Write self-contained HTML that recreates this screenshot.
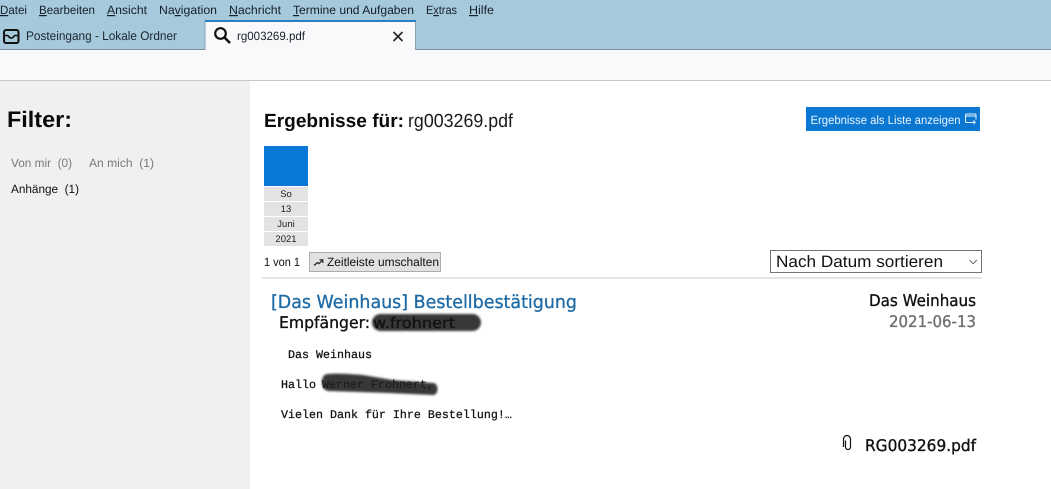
<!DOCTYPE html>
<html lang="de"><head><meta charset="utf-8"><title>rg003269.pdf</title>
<style>
html,body{margin:0;padding:0;background:#fff;width:1051px;height:489px;overflow:hidden}
svg{display:block}
text{font-family:"Liberation Sans",sans-serif;white-space:pre}
.d{font-family:"DejaVu Sans",sans-serif}
.m{font-family:"Liberation Mono",monospace;stroke:#111;stroke-width:.25}
.h{stroke:#111;stroke-width:.35}
.u{text-decoration:underline}
</style></head><body>
<svg width="1051" height="489" viewBox="0 0 1051 489" xmlns="http://www.w3.org/2000/svg" text-rendering="geometricPrecision">
<defs><filter id="b" x="-20%" y="-50%" width="140%" height="200%"><feGaussianBlur stdDeviation="1.1"/></filter></defs>
<rect width="1051" height="489" fill="#fff"/>
<rect width="1051" height="50" fill="#a6c9db"/>
<rect y="49" width="1051" height="1" fill="#7f8f99"/>
<rect y="50" width="1051" height="30" fill="#f9f9fb"/>
<rect y="80" width="1051" height="1" fill="#c8c8c8"/>
<rect y="81" width="250" height="408" fill="#f0f0f0"/>
<g font-size="12" fill="#15202a">
<text x="0" y="14" textLength="27" lengthAdjust="spacingAndGlyphs"><tspan class="u">D</tspan>atei</text>
<text x="39" y="14" textLength="56" lengthAdjust="spacingAndGlyphs"><tspan class="u">B</tspan>earbeiten</text>
<text x="107" y="14" textLength="40" lengthAdjust="spacingAndGlyphs"><tspan class="u">A</tspan>nsicht</text>
<text x="159" y="14" textLength="58" lengthAdjust="spacingAndGlyphs">Na<tspan class="u">v</tspan>igation</text>
<text x="229" y="14" textLength="52" lengthAdjust="spacingAndGlyphs"><tspan class="u">N</tspan>achricht</text>
<text x="293" y="14" textLength="121" lengthAdjust="spacingAndGlyphs"><tspan class="u">T</tspan>ermine und Aufgaben</text>
<text x="426" y="14" textLength="31" lengthAdjust="spacingAndGlyphs">E<tspan class="u">x</tspan>tras</text>
<text x="469" y="14" textLength="25" lengthAdjust="spacingAndGlyphs"><tspan class="u">H</tspan>ilfe</text>
</g>
<!-- inactive tab -->
<rect x="4" y="30" width="14.500" height="13" rx="2" fill="none" stroke="#111" stroke-width="2"/>
<path d="M4 35.500h3.500c1 0 1.300 2.600 3.700 2.600s2.700-2.600 3.700-2.600H18" fill="none" stroke="#111" stroke-width="1.600"/>
<text x="26" y="40" font-size="12.500" fill="#1c2730" textLength="151" lengthAdjust="spacingAndGlyphs">Posteingang - Lokale Ordner</text>
<!-- active tab -->
<rect x="205" y="20" width="210.500" height="30" fill="#f9f9fb"/>
<rect x="204.500" y="21" width="1" height="29" fill="#8aa0ad"/>
<rect x="415" y="21" width="1" height="29" fill="#8aa0ad"/>
<rect x="205" y="20" width="211" height="2" fill="#2b80c4"/>
<circle cx="220.500" cy="33.500" r="5.300" fill="none" stroke="#111" stroke-width="2.200"/>
<path d="M224.500 37.500l5.500 5.500" stroke="#111" stroke-width="2.600" fill="none"/>
<text x="237" y="40" font-size="12" fill="#15202a" textLength="68" lengthAdjust="spacingAndGlyphs">rg003269.pdf</text>
<path d="M393.500 32l9 9m0-9l-9 9" stroke="#222" stroke-width="1.600" fill="none"/>
<!-- sidebar -->
<text x="7" y="127" font-size="22.500" font-weight="700" fill="#0a0a0a" textLength="65" lengthAdjust="spacingAndGlyphs">Filter:</text>
<g font-size="12">
<text x="11" y="167" fill="#7a7a7a" textLength="61" lengthAdjust="spacingAndGlyphs">Von mir  (0)</text>
<text x="89" y="167" fill="#7a7a7a" textLength="65" lengthAdjust="spacingAndGlyphs">An mich  (1)</text>
<text x="11" y="193" fill="#111" textLength="68" lengthAdjust="spacingAndGlyphs">Anhänge  (1)</text>
</g>
<!-- heading -->
<text x="264" y="127" font-size="19" font-weight="700" fill="#0a0a0a" textLength="140" lengthAdjust="spacingAndGlyphs">Ergebnisse für:</text>
<text x="408" y="127" font-size="19" fill="#1a1a1a" textLength="105" lengthAdjust="spacingAndGlyphs">rg003269.pdf</text>
<rect x="806" y="107" width="174" height="24" fill="#0a78d2"/>
<text x="810.500" y="124" font-size="12" fill="#e8f3fb" textLength="150" lengthAdjust="spacingAndGlyphs">Ergebnisse als Liste anzeigen</text>
<path d="M972 122.500h-5.500a1 1 0 0 1-1-1v-6.500a1 1 0 0 1 1-1h8.500a1 1 0 0 1 1 1v4.500M965.500 116h10.500M974 120v4.500M971.800 122.200h4.400" fill="none" stroke="#e8f3fb" stroke-width="1"/>
<!-- calendar -->
<rect x="264" y="146" width="44" height="40" fill="#0a78d7"/>
<g fill="#e3e3e3">
<rect x="264" y="187" width="44" height="14"/>
<rect x="264" y="202" width="44" height="14"/>
<rect x="264" y="217" width="44" height="14"/>
<rect x="264" y="232" width="44" height="14"/>
</g>
<g font-size="9.500" fill="#222" text-anchor="middle">
<text x="286" y="197">So</text>
<text x="286" y="212">13</text>
<text x="286" y="227">Juni</text>
<text x="286" y="242">2021</text>
</g>
<!-- controls -->
<text x="264" y="266" font-size="12" fill="#111" textLength="36" lengthAdjust="spacingAndGlyphs">1 von 1</text>
<rect x="309.500" y="252.500" width="131" height="19" fill="#e1e1e1" stroke="#adadad"/>
<path d="M314 265.500l3.500-3 1.500 1.200 3.500-3.700M319.500 259.800h3.300v3.200" fill="none" stroke="#222" stroke-width="1.200"/>
<text x="327" y="266" font-size="12" fill="#111" textLength="112" lengthAdjust="spacingAndGlyphs">Zeitleiste umschalten</text>
<rect x="770.500" y="250.500" width="211" height="22" fill="#fff" stroke="#767676"/>
<text x="776" y="267" font-size="16.500" fill="#111" textLength="167" lengthAdjust="spacingAndGlyphs">Nach Datum sortieren</text>
<path d="M969.500 260l3.700 3.700 3.700-3.700" fill="none" stroke="#666" stroke-width="1"/>
<rect x="262" y="277" width="720" height="2" fill="#e4e4e4"/>
<!-- result -->
<text class="d" x="271" y="308" font-size="18" fill="#1d6aa5" stroke="#1d6aa5" stroke-width=".3" textLength="306" lengthAdjust="spacingAndGlyphs">[Das Weinhaus] Bestellbestätigung</text>
<text class="d h" x="279" y="328" font-size="16" fill="#111" textLength="91" lengthAdjust="spacingAndGlyphs">Empfänger:</text>
<rect x="372" y="314" width="109" height="17" rx="8.500" fill="#383838" filter="url(#b)"/>
<text class="d" x="373" y="328" font-size="15" fill="#111" stroke="#111" stroke-width=".3" textLength="82" lengthAdjust="spacingAndGlyphs">w.frohnert</text>
<text class="m" font-size="11.670" fill="#111" x="288" y="358">Das Weinhaus</text>
<text class="m" font-size="11.670" fill="#111" x="281" y="388">Hallo</text>
<text class="m" font-size="11.670" fill="#111" x="281" y="418">Vielen Dank für Ihre Bestellung!…</text>
<path d="M327 374c-7 1-7 16 1 17l60 2l45 2c6 0 6-12 0-12l-40-3l-30-5c-12-1-25-2-36-1z" fill="#383838" filter="url(#b)"/>
<text class="m" x="322" y="388" font-size="11.670" fill="#1e1e1e" style="stroke:#1e1e1e">Werner Frohnert,</text>
<text class="d h" x="976" y="306" font-size="16" fill="#111" text-anchor="end" textLength="107" lengthAdjust="spacingAndGlyphs">Das Weinhaus</text>
<text class="d" x="976" y="327" font-size="16" fill="#6f6f6f" stroke="#6f6f6f" stroke-width=".35" text-anchor="end" textLength="87" lengthAdjust="spacingAndGlyphs">2021-06-13</text>
<path d="M845.500 440v6.500a2.500 2.500 0 0 0 5 0v-8a3.500 3.500 0 0 0-7 0v8" transform="translate(0 .5)" fill="none" stroke="#111" stroke-width="1.200"/>
<text class="d h" x="865" y="451" font-size="16" fill="#111" textLength="111" lengthAdjust="spacingAndGlyphs">RG003269.pdf</text>
</svg>
</body></html>
